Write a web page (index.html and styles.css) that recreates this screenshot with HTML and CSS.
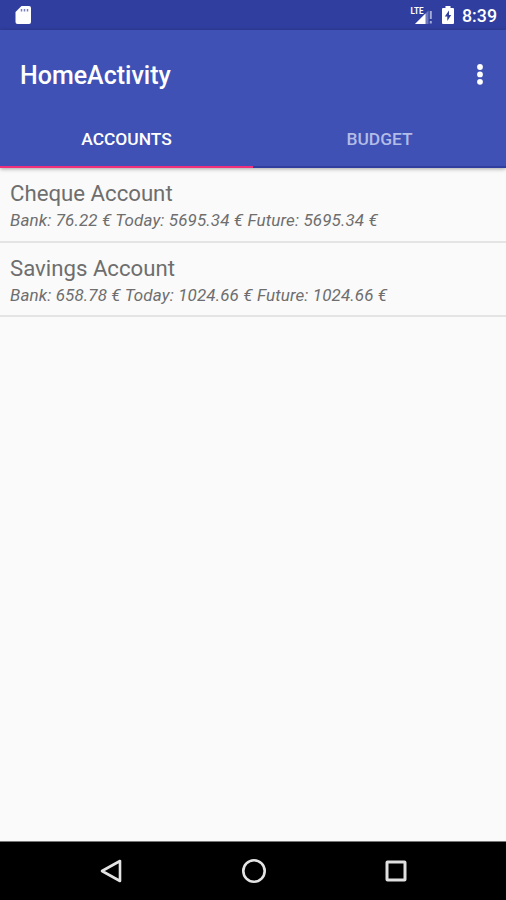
FILE: index.html
```html
<!DOCTYPE html>
<html lang="en">
<head>
  <meta charset="UTF-8"/>
  <meta name="viewport" content="width=device-width, initial-scale=1.0"/>
  <title>HomeActivity</title>
  <link rel="stylesheet" href="styles.css">
</head>
<body>

<div class="status-bar">
  <svg width="18" height="20" viewBox="0 0 18 20">
    <path d="M6.500 1H14Q16 1 16 3V17Q16 19 14 19H2.500Q.5 19 .5 17V7Z" fill="#fff"/>
    <path d="M6.500 4V6.500M9.500 4V6.500M12.500 4V6.500" stroke="#7780bd" stroke-width="1.500"/>
  </svg>
  <div class="status-right">
    <svg width="24" height="20" viewBox="0 0 24 20">
      <path d="M20 4L23 1V19H5Z" fill="#6e79bd"/>
      <path d="M5 19L15.500 8.500V19Z" fill="#fff"/>
      <path d="M18.500 1H24V19H18.500Z" fill="#303f9f"/>
      <path d="M20.800 6V14M20.800 16V18.500" stroke="#a4add8" stroke-width="2"/>
      <text class="lte" x="0.500" y="9" textLength="13" lengthAdjust="spacingAndGlyphs">LTE</text>
    </svg>
    <svg class="battery" width="12" height="20" viewBox="0 0 12 20">
      <path d="M3.500 1H8.500V3H11Q12 3 12 4V18Q12 19 11 19H1Q0 19 0 18V4Q0 3 1 3H3.500Z" fill="#fff"/>
      <path d="M7 5.500L2.800 11.500H5.300V16L9.200 10H7Z" fill="#303f9f"/>
    </svg>
    <span class="clock">8:39</span>
  </div>
</div>

<header class="app-bar">
  <div class="toolbar">
    <h1>HomeActivity</h1>
    <svg width="8" height="22" viewBox="0 0 8 22" fill="#fff">
      <circle cx="4" cy="3" r="2.900"/>
      <circle cx="4" cy="10.400" r="2.900"/>
      <circle cx="4" cy="17.800" r="2.900"/>
    </svg>
  </div>
  <nav class="tabs">
    <a class="tab active">Accounts</a>
    <a class="tab">Budget</a>
  </nav>
</header>

<main class="accounts">
  <div class="account">
    <div class="name">Cheque Account</div>
    <div class="balance">Bank: 76.22 € Today: 5695.34 € Future: 5695.34 €</div>
  </div>
  <div class="account">
    <div class="name">Savings Account</div>
    <div class="balance">Bank: 658.78 € Today: 1024.66 € Future: 1024.66 €</div>
  </div>
</main>

<footer class="nav-bar">
  <svg width="24" height="26" viewBox="0 0 24 26">
    <path d="M21 3V23L3 13Z" fill="none" stroke="#e4e4e4" stroke-width="2.600" stroke-linejoin="round"/>
  </svg>
  <svg width="26" height="26" viewBox="0 0 26 26">
    <circle cx="13" cy="13" r="10.700" fill="none" stroke="#e4e4e4" stroke-width="2.600"/>
  </svg>
  <svg width="24" height="26" viewBox="0 0 24 26">
    <rect x="3" y="4" width="18" height="18" rx=".5" fill="none" stroke="#e0e0e0" stroke-width="3" stroke-linejoin="round"/>
  </svg>
</footer>

</body>
</html>
```

FILE: styles.css
```css
body {
  margin: 0;
  height: 900px;
  display: flex;
  flex-direction: column;
  font-family: Roboto, sans-serif;
  background: #fafafa;
  overflow: hidden;
}
svg {
  display: block;
}
.status-bar {
  height: 30px;
  box-sizing: border-box;
  padding: 0 9px 0 15px;
  display: flex;
  align-items: center;
  justify-content: space-between;
  background: #303f9f;
  color: #fff;
}
.status-right {
  display: flex;
  align-items: center;
}
.lte {
  font-size: 9px;
  font-weight: 700;
  fill: #fff;
}
.battery {
  margin: 0 8px;
}
.clock {
  font-size: 17.8px;
  font-weight: 500;
  line-height: 30px;
  padding-top: 2px;
}
.app-bar {
  height: 138px;
  background: #3f51b5;
  color: #fff;
  box-shadow: 0 1px 4px rgba(0, 0, 0, 0.35);
}
.toolbar {
  height: 82px;
  box-sizing: border-box;
  padding: 0 22px 0 20px;
  display: flex;
  align-items: center;
  justify-content: space-between;
}
.toolbar h1 {
  margin: 0;
  padding-top: 9px;
  font-size: 25px;
  font-weight: 500;
}
.toolbar svg {
  margin-top: 7px;
}
.tabs {
  height: 56px;
  display: flex;
}
.tab {
  flex: 1;
  box-sizing: border-box;
  border-bottom: 2px solid #303f9f;
  text-align: center;
  line-height: 54px;
  font-size: 17.4px;
  font-weight: 500;
  text-transform: uppercase;
  color: #b3bce6;
}
.tab.active {
  color: #fff;
  border-bottom-color: #f0307a;
}
.accounts {
  flex: 1;
}
.account {
  height: 75px;
  box-sizing: border-box;
  padding: 11px 10px 0;
  border-bottom: 2px solid #e4e4e4;
  color: #6e6e6e;
}
.account + .account {
  height: 74px;
}
.name {
  font-size: 22.2px;
  line-height: 28px;
}
.balance {
  font-size: 17px;
  line-height: 26px;
  letter-spacing: 0.12px;
  font-style: italic;
}
.nav-bar {
  height: 59px;
  box-sizing: border-box;
  border-top: 1px solid #777;
  padding: 0 98px 0 99px;
  display: flex;
  align-items: center;
  justify-content: space-between;
  background: #000;
}
```
